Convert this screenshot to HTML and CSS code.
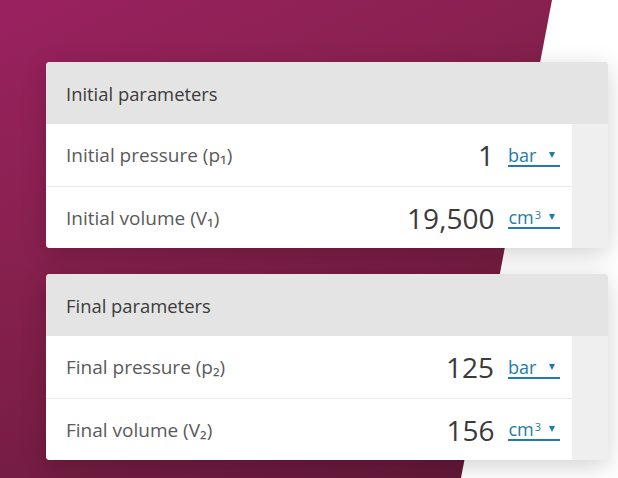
FILE: index.html
```html
<!DOCTYPE html>
<html>
<head>
<meta charset="utf-8">
<link rel="stylesheet" href="styles.css">
</head>
<body>
<div class="bg"></div>
<main class="page">
  <section class="card">
    <header class="card-header">Initial parameters</header>
    <div class="card-row">
      <div class="row-main">
        <span class="label">Initial pressure (p₁)</span>
        <span class="value">1</span>
        <a class="unit">bar <span class="caret"></span></a>
      </div>
      <div class="gutter"></div>
    </div>
    <div class="card-row">
      <div class="row-main">
        <span class="label">Initial volume (V₁)</span>
        <span class="value">19,500</span>
        <a class="unit">cm<sup>3</sup> <span class="caret"></span></a>
      </div>
      <div class="gutter"></div>
    </div>
  </section>
  <section class="card">
    <header class="card-header">Final parameters</header>
    <div class="card-row">
      <div class="row-main">
        <span class="label">Final pressure (p₂)</span>
        <span class="value">125</span>
        <a class="unit">bar <span class="caret"></span></a>
      </div>
      <div class="gutter"></div>
    </div>
    <div class="card-row">
      <div class="row-main">
        <span class="label">Final volume (V₂)</span>
        <span class="value">156</span>
        <a class="unit">cm<sup>3</sup> <span class="caret"></span></a>
      </div>
      <div class="gutter"></div>
    </div>
  </section>
</main>
</body>
</html>
```
FILE: styles.css
```css
html, body {
  margin: 0;
  padding: 0;
  width: 618px;
  height: 478px;
  overflow: hidden;
  background: #ffffff;
  font-family: "Open Sans", "Noto Sans", sans-serif;
}
.bg {
  position: absolute;
  left: 0;
  top: 0;
  width: 618px;
  height: 478px;
  background: linear-gradient(155deg, #9a2160 0%, #8a2151 30%, #7b1e45 55%, #5c1735 100%);
  clip-path: polygon(0 0, 552px 0, 461px 478px, 0 478px);
}
.page {
  position: relative;
  padding: 62px 10px 0 46px;
  display: flex;
  flex-direction: column;
  gap: 26px;
}
.card {
  width: 562px;
  border-radius: 4px;
  overflow: hidden;
  background: #efefef;
  box-shadow: 0 6px 24px rgba(0, 0, 0, 0.18);
}
.card-header {
  height: 62px;
  background: #e4e4e4;
  display: flex;
  align-items: center;
  padding: 0 20px;
  font-size: 18.4px;
  color: #3b3b3b;
}
.card-row {
  display: grid;
  grid-template-columns: 1fr 36px;
  height: 62px;
}
.card-row + .card-row .row-main {
  border-top: 1px solid #ebebeb;
}
.row-main {
  background: #ffffff;
  display: flex;
  align-items: center;
  padding: 0 12px 0 20px;
}
.gutter {
  background: #efefef;
}
.label {
  flex: 1;
  font-size: 19px;
  color: #5a5a5a;
}
.value {
  font-size: 28px;
  color: #3a3a3a;
  margin-right: 14px;
}
.unit {
  font-size: 18px;
  color: #1f7bab;
  text-decoration: none;
  border-bottom: 2px solid #1f7bab;
  line-height: 20px;
  display: inline-flex;
  align-items: center;
  white-space: pre;
  margin-top: 1px;
}
.unit sup {
  font-size: 11px;
  line-height: 0;
  position: relative;
  top: -2px;
  margin-left: 1px;
}
.caret {
  display: inline-block;
  width: 0;
  height: 0;
  border-left: 3.5px solid transparent;
  border-right: 3.5px solid transparent;
  border-top: 6px solid #1f7bab;
  margin-left: 8px;
  margin-right: 5px;
}
```
